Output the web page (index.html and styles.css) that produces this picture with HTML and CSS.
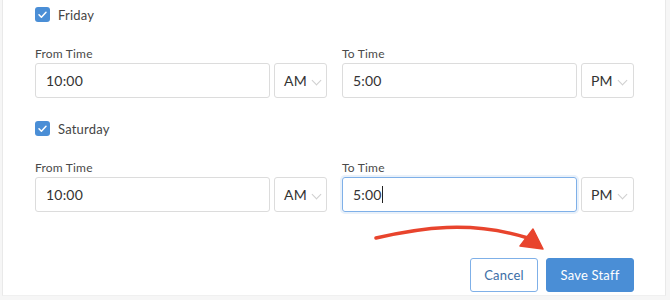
FILE: index.html
```html
<!DOCTYPE html>
<html lang="en">
<head>
    <meta charset="UTF-8">
    <meta name="viewport" content="width=device-width, initial-scale=1.0">
    <title>Staff Hours</title>
    <link rel="stylesheet" href="styles.css">
</head>
<body>
    <div class="panel">

        <div class="day">
            <span class="check"><svg width="15" height="15" viewBox="0 0 15 15"><path d="M4 7.8l2.4 2.4L11 5.2" fill="none" stroke="#fff" stroke-width="1.5" stroke-linecap="round" stroke-linejoin="round"/></svg></span>
            <span class="day-name">Friday</span>
        </div>
        <div class="times">
            <div class="field">
                <div class="label">From Time</div>
                <div class="controls">
                    <div class="input">10:00</div>
                    <div class="select">AM <span class="chev"></span></div>
                </div>
            </div>
            <div class="field">
                <div class="label">To Time</div>
                <div class="controls">
                    <div class="input">5:00</div>
                    <div class="select">PM <span class="chev"></span></div>
                </div>
            </div>
        </div>

        <div class="day">
            <span class="check"><svg width="15" height="15" viewBox="0 0 15 15"><path d="M4 7.8l2.4 2.4L11 5.2" fill="none" stroke="#fff" stroke-width="1.5" stroke-linecap="round" stroke-linejoin="round"/></svg></span>
            <span class="day-name">Saturday</span>
        </div>
        <div class="times">
            <div class="field">
                <div class="label">From Time</div>
                <div class="controls">
                    <div class="input">10:00</div>
                    <div class="select">AM <span class="chev"></span></div>
                </div>
            </div>
            <div class="field">
                <div class="label">To Time</div>
                <div class="controls">
                    <div class="input focus">5:00<span class="caret"></span></div>
                    <div class="select">PM <span class="chev"></span></div>
                </div>
            </div>
        </div>

        <div class="actions">
            <button class="btn cancel">Cancel</button>
            <button class="btn save">Save Staff</button>
        </div>
    </div>

    <svg class="arrow" width="670" height="300" viewBox="0 0 670 300">
        <path d="M376 238 C420 228 470 220 528 238" fill="none" stroke="#e8442d" stroke-width="3.5" stroke-linecap="round"/>
        <path d="M533 229 L543 249 L520 246 Z" fill="#e8442d" stroke="#e8442d" stroke-width="1.5" stroke-linejoin="round"/>
    </svg>
</body>
</html>
```

FILE: styles.css
```css
body {
    margin: 0;
    background: #f6f6f6;
    font-family: Lato, "Open Sans", sans-serif;
    color: #333;
    position: relative;
}

.panel {
    margin-left: 2px;
    width: 664px;
    height: 296px;
    box-sizing: border-box;
    padding: 7px 31px 0 32px;
    background: #fff;
    border-left: 1px solid #e9e9e9;
    border-right: 1px solid #e9e9e9;
    border-bottom: 1px solid #f0f0f0;
}

.day {
    display: flex;
    align-items: center;
    height: 15px;
    gap: 8px;
}

.check {
    width: 15px;
    height: 15px;
    border-radius: 3px;
    background: #4a8ed6;
    display: block;
}

.check svg {
    display: block;
}

.day-name {
    font-size: 13px;
    color: #444;
    letter-spacing: 0.2px;
}

.times {
    display: flex;
    gap: 15px;
    margin-top: 24px;
    margin-bottom: 23px;
}

.field {
    flex: 1;
}

.label {
    font-size: 12px;
    line-height: 15px;
    color: #4a4a4a;
    letter-spacing: 0.2px;
    margin-bottom: 2px;
}

.controls {
    display: flex;
    gap: 4px;
}

.input, .select {
    height: 35px;
    box-sizing: border-box;
    border: 1px solid #dcdcdc;
    border-radius: 3px;
    display: flex;
    align-items: center;
    font-size: 14px;
    color: #333;
    letter-spacing: 0.2px;
}

.input {
    flex: 1;
    padding-left: 10px;
}

.input.focus {
    border-color: #7fb0e8;
    box-shadow: 0 0 0 2px rgba(74, 142, 214, 0.12);
}

.caret {
    width: 1px;
    height: 17px;
    background: #222;
}

.select {
    width: 53px;
    padding-left: 9px;
    gap: 6px;
}

.chev {
    width: 6px;
    height: 6px;
    border-right: 1px solid #cfcfcf;
    border-bottom: 1px solid #cfcfcf;
    transform: rotate(45deg);
    margin-top: -1px;
}

.actions {
    display: flex;
    justify-content: flex-end;
    gap: 8px;
    margin-top: 46px;
}

.btn {
    height: 34px;
    border-radius: 3px;
    font-family: Lato, "Open Sans", sans-serif;
    font-size: 13px;
    letter-spacing: 0.2px;
    cursor: pointer;
}

.cancel {
    width: 68px;
    background: #fff;
    border: 1px solid #7fb0e8;
    color: #3d6ea6;
}

.save {
    width: 88px;
    background: #4a8ed6;
    border: 1px solid #4a8ed6;
    color: #fff;
}

.arrow {
    position: absolute;
    top: 0;
    left: 0;
    pointer-events: none;
}
```
